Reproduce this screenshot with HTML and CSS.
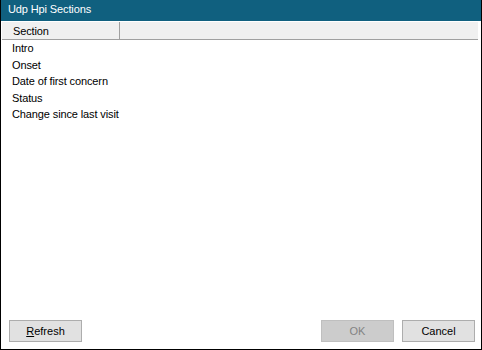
FILE: index.html
```html
<!DOCTYPE html>
<html>
	<head>
		<meta charset="UTF-8" />
		<title>Udp Hpi Sections</title>
		<link rel="stylesheet" href="styles.css">
	</head>
	<body>
		<div class="window">
			<div class="titlebar">Udp Hpi Sections</div>
			<div class="listview">
				<div class="list-header">
					<div class="col-head">Section</div>
					<div class="col-rest"></div>
				</div>
				<ul class="rows">
					<li>Intro</li>
					<li>Onset</li>
					<li>Date of first concern</li>
					<li>Status</li>
					<li>Change since last visit</li>
				</ul>
			</div>
			<div class="buttons">
				<button class="btn"><u>R</u>efresh</button>
				<div class="spacer"></div>
				<button class="btn" disabled>OK</button>
				<button class="btn">Cancel</button>
			</div>
		</div>
	</body>
</html>
```

FILE: styles.css
```css
* {
	box-sizing: border-box;
	font-family: "Liberation Sans", Arial, sans-serif;
}

html,
body {
	margin: 0;
	background-color: #ffffff;
}

.window {
	width: 482px;
	height: 350px;
	display: flex;
	flex-direction: column;
	border: 1px solid #000000;
	border-top: none;
	background-color: #ffffff;
	font-size: 11px;
	color: #000000;
	letter-spacing: -0.12px;
}

.titlebar {
	height: 21px;
	flex: none;
	background-color: #10607f;
	color: #ffffff;
	padding: 3px 0 0 7px;
	font-size: 11px;
}

.listview {
	flex: 1;
	display: flex;
	flex-direction: column;
	margin: 1px 3px 0 1px;
}

.list-header {
	display: flex;
	height: 18px;
	background-color: #f0f0f0;
	border-bottom: 1px solid #a0a0a0;
}

.col-head {
	width: 118px;
	padding: 3px 0 0 11px;
	border-right: 1px solid #a0a0a0;
}

.col-rest {
	flex: 1;
}

.rows {
	list-style: none;
	margin: 0;
	padding: 0 0 0 10px;
}

.rows li {
	height: 16.5px;
	line-height: 16px;
}

.buttons {
	display: flex;
	gap: 8px;
	padding: 0 6px 7px 8px;
}

.spacer {
	flex: 1;
}

.btn {
	width: 73px;
	height: 22px;
	padding: 0;
	font-size: 11px;
	color: #000000;
	background-color: #e1e1e1;
	border: 1px solid #adadad;
	border-radius: 0;
}

.btn:disabled {
	color: #838383;
	background-color: #cccccc;
	border-color: #bfbfbf;
}
```
